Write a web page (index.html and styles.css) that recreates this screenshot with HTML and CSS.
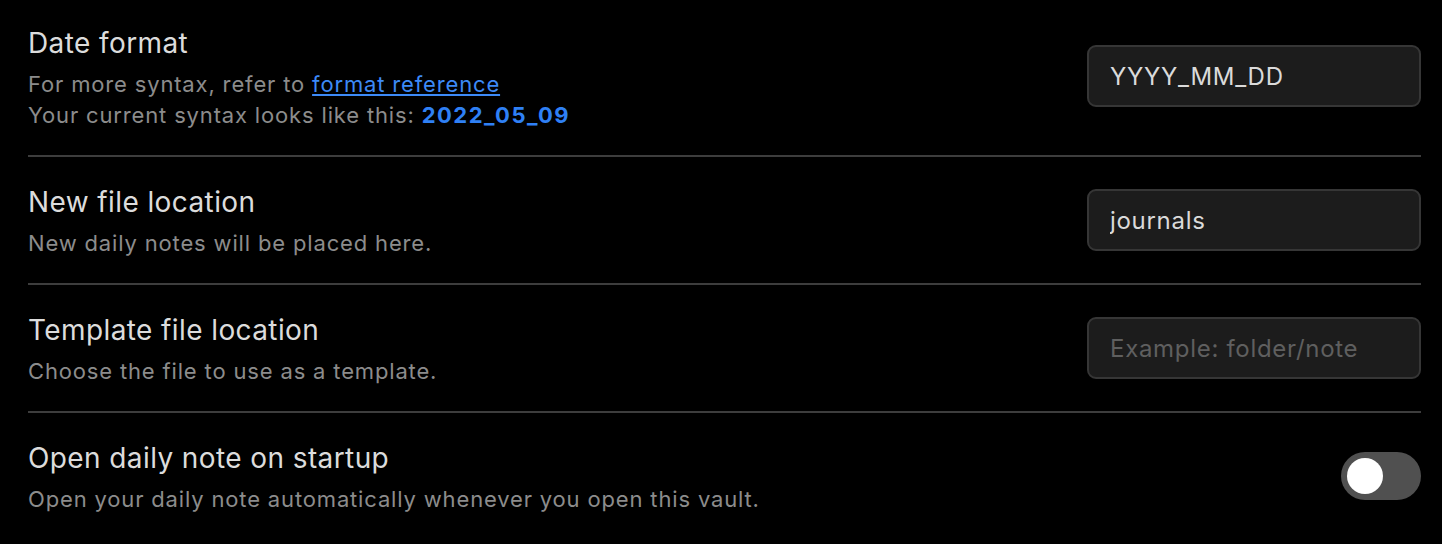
FILE: index.html
```html
<!DOCTYPE html>
<html lang="en">
<head>
<meta charset="UTF-8">
<title>Daily notes settings</title>
<link rel="stylesheet" href="styles.css">
</head>
<body>

<div class="settings">
  <div class="setting-item first">
    <div class="setting-info">
      <div class="setting-name">Date format</div>
      <div class="setting-desc">
        For more syntax, refer to <a href="#">format reference</a><br>
        Your current syntax looks like this: <b class="preview">2022_05_09</b>
      </div>
    </div>
    <input class="text-input" type="text" value="YYYY_MM_DD">
  </div>

  <div class="setting-item">
    <div class="setting-info">
      <div class="setting-name">New file location</div>
      <div class="setting-desc">New daily notes will be placed here.</div>
    </div>
    <input class="text-input" type="text" value="journals">
  </div>

  <div class="setting-item">
    <div class="setting-info">
      <div class="setting-name">Template file location</div>
      <div class="setting-desc">Choose the file to use as a template.</div>
    </div>
    <input class="text-input" type="text" placeholder="Example: folder/note">
  </div>

  <div class="setting-item">
    <div class="setting-info">
      <div class="setting-name">Open daily note on startup</div>
      <div class="setting-desc">Open your daily note automatically whenever you open this vault.</div>
    </div>
    <div class="toggle"><div class="knob"></div></div>
  </div>
</div>

</body>
</html>
```

FILE: styles.css
```css
body {
  margin: 0;
  background: #000;
  font-family: Inter, "Noto Sans", sans-serif;
  color: #dadada;
}
.settings {
  padding: 0 21px 0 28px;
}
.setting-item {
  display: flex;
  align-items: center;
  justify-content: space-between;
  padding: 28px 0 24px;
  border-bottom: 2px solid #3d3d3d;
}
.setting-item.first {
  padding-top: 26px;
}
.setting-item:last-child {
  border-bottom: none;
}
.setting-name {
  font-size: 28px;
  line-height: 34px;
  letter-spacing: 0.4px;
  color: #dcdcdc;
}
.setting-desc {
  margin-top: 9px;
  font-size: 22px;
  line-height: 31px;
  letter-spacing: 0.84px;
  color: #8c8c8c;
}
.setting-desc a {
  color: #3d8af7;
}
.preview {
  color: #2f80f5;
  font-weight: 700;
  letter-spacing: 1.5px;
}
.text-input {
  box-sizing: border-box;
  width: 334px;
  height: 62px;
  margin-bottom: 4px;
  padding: 0 21px;
  background: #1c1c1c;
  border: 2px solid #363636;
  border-radius: 9px;
  color: #dadada;
  font-family: inherit;
  font-size: 24px;
  letter-spacing: 0.7px;
  outline: none;
}
.setting-item.first .text-input {
  margin-bottom: 5px;
}
.text-input::placeholder {
  color: #5f5f5f;
}
.toggle {
  width: 80px;
  height: 48px;
  margin-bottom: 5px;
  border-radius: 24px;
  background: #505050;
  padding: 6px;
  box-sizing: border-box;
}
.knob {
  width: 36px;
  height: 36px;
  border-radius: 50%;
  background: #fff;
}
```
